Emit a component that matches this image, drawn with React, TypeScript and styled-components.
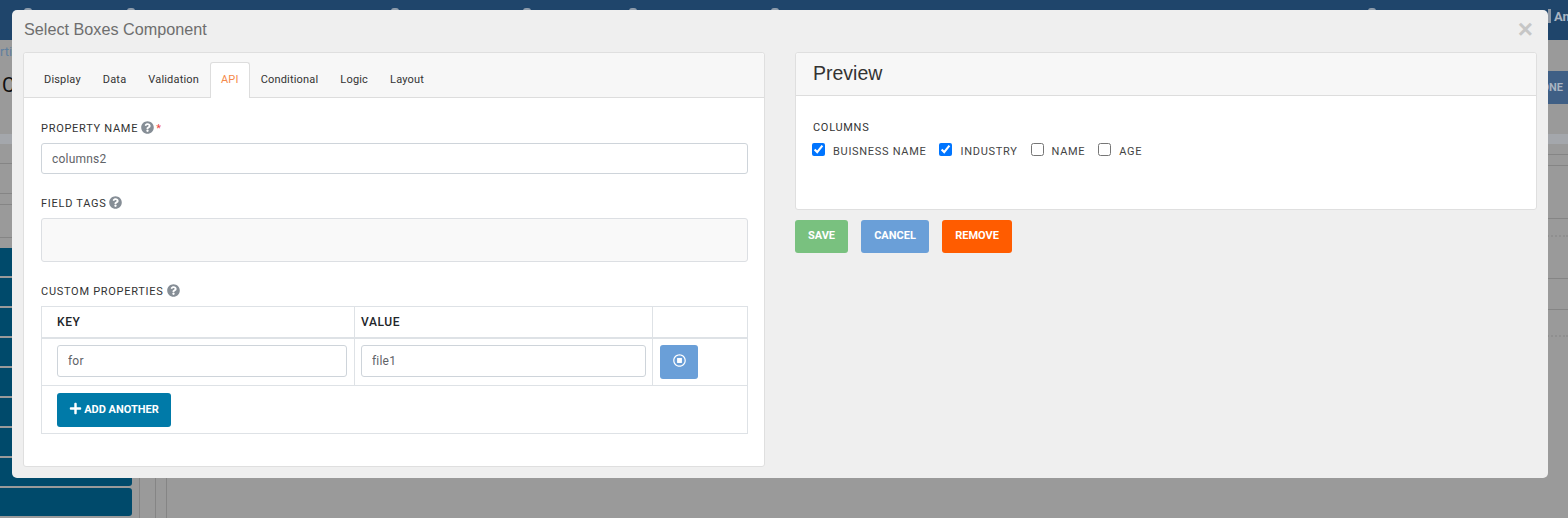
import { FaPlus, FaQuestionCircle, FaRegStopCircle } from 'react-icons/fa';
import styled, { createGlobalStyle } from 'styled-components';

const tabs = ['Display', 'Data', 'Validation', 'API', 'Conditional', 'Logic', 'Layout'];
const columns = [
  { label: 'BUISNESS NAME', checked: true },
  { label: 'INDUSTRY', checked: true },
  { label: 'NAME', checked: false },
  { label: 'AGE', checked: false },
];
const topBarGaps = [24, 95, 256, 124, 98, 134, 589];
const sideItems = [0, 1, 2, 3, 4, 5, 6, 7, 8];
const leftRows = [20, 30, 11, 33];
const rightRows = [
  { height: 11, dotted: false },
  { height: 11, dotted: false },
  { height: 53, dotted: false },
  { height: 18, dotted: true },
  { height: 42, dotted: false },
  { height: 31, dotted: false },
  { height: 27, dotted: true },
];

export default function App() {
  return (
    <>
      <GlobalStyle />
      <Page>
        <TopBar>
          <TopBarItems>
            {topBarGaps.map((gap, i) => (
              <TopBarDot key={i} $gap={gap} />
            ))}
          </TopBarItems>
          <UserBox>
            <UserIcon />
            <UserName>Am</UserName>
          </UserBox>
        </TopBar>
        <Crumb>rtic</Crumb>
        <TitleRow>
          <PageTitle>C</PageTitle>
          <DoneButton>DONE</DoneButton>
        </TitleRow>
        <Columns>
          <LeftPane>
            <Band />
            {leftRows.map((height, i) => (
              <PageRow key={i} $height={height} />
            ))}
            <SideList>
              {sideItems.map((item) => (
                <SideButton key={item} />
              ))}
            </SideList>
          </LeftPane>
          <RightPane>
            <Band />
            {rightRows.map((row, i) => (
              <PageRow key={i} $height={row.height} $dotted={row.dotted} />
            ))}
            <GuideLines>
              <Guide $width={16} />
              <Guide $width={11} />
              <Guide $width={0} />
            </GuideLines>
          </RightPane>
        </Columns>

        <Modal>
          <ModalHeader>
            <ModalTitle>Select Boxes Component</ModalTitle>
            <CloseButton>×</CloseButton>
          </ModalHeader>
          <ModalBody>
            <Panel>
              <TabBar>
                {tabs.map((tab) => (
                  <Tab key={tab} $active={tab === 'API'}>
                    {tab}
                  </Tab>
                ))}
              </TabBar>
              <FormBody>
                <Field>
                  <Label>
                    PROPERTY NAME <HelpIcon /> <Required>*</Required>
                  </Label>
                  <TextInput defaultValue="columns2" />
                </Field>
                <Field>
                  <Label>
                    FIELD TAGS <HelpIcon />
                  </Label>
                  <TagsBox />
                </Field>
                <Label>
                  CUSTOM PROPERTIES <HelpIcon />
                </Label>
                <PropsTable>
                  <colgroup>
                    <col width={313} />
                    <col width={298} />
                    <col />
                  </colgroup>
                  <thead>
                    <tr>
                      <KeyHead>KEY</KeyHead>
                      <ValueHead>VALUE</ValueHead>
                      <ValueHead />
                    </tr>
                  </thead>
                  <tbody>
                    <tr>
                      <KeyCell>
                        <TableInput defaultValue="for" />
                      </KeyCell>
                      <ValueCell>
                        <TableInput defaultValue="file1" />
                      </ValueCell>
                      <ActionCell>
                        <StopButton>
                          <FaRegStopCircle />
                        </StopButton>
                      </ActionCell>
                    </tr>
                    <tr>
                      <AddCell colSpan={3}>
                        <AddButton>
                          <FaPlus />
                          ADD ANOTHER
                        </AddButton>
                      </AddCell>
                    </tr>
                  </tbody>
                </PropsTable>
              </FormBody>
            </Panel>

            <PreviewColumn>
              <PreviewPanel>
                <PreviewHeader>Preview</PreviewHeader>
                <PreviewBody>
                  <PreviewLabel>COLUMNS</PreviewLabel>
                  <CheckRow>
                    {columns.map((column) => (
                      <CheckLabel key={column.label}>
                        <Check type="checkbox" defaultChecked={column.checked} />
                        {column.label}
                      </CheckLabel>
                    ))}
                  </CheckRow>
                </PreviewBody>
              </PreviewPanel>
              <Actions>
                <ActionButton $color="#79c17f" $width={53}>SAVE</ActionButton>
                <ActionButton $color="#6a9fd8" $width={68}>CANCEL</ActionButton>
                <ActionButton $color="#ff5c00" $width={70}>REMOVE</ActionButton>
              </Actions>
            </PreviewColumn>
          </ModalBody>
        </Modal>
      </Page>
    </>
  );
}

const GlobalStyle = createGlobalStyle`
  html, body {
    margin: 0;
    padding: 0;
    background: #9a9a9a;
    font-family: 'Roboto', 'Liberation Sans', sans-serif;
  }
  * {
    box-sizing: border-box;
  }
`;

const Page = styled.div`
  position: relative;
  display: flex;
  flex-direction: column;
  width: 1568px;
  height: 518px;
  overflow: hidden;
  background: #9a9a9a;
`;

const TopBar = styled.div`
  display: flex;
  align-items: flex-start;
  justify-content: space-between;
  height: 40px;
  flex: none;
  background: #1f456b;
`;

const TopBarItems = styled.div`
  display: flex;
  padding-top: 8px;
`;

const TopBarDot = styled.span<{ $gap: number }>`
  width: 8px;
  height: 4px;
  margin-left: ${({ $gap }) => $gap}px;
  border-radius: 3px 3px 0 0;
  background: #8e9cab;
`;

const UserBox = styled.div`
  display: flex;
  gap: 3px;
  width: 20px;
  margin-top: 9px;
  white-space: nowrap;
`;

const UserIcon = styled.span`
  width: 3px;
  height: 14px;
  flex: none;
  background: #8f99a6;
`;

const UserName = styled.span`
  font-size: 13px;
  font-weight: 700;
  color: #a9b4c2;
`;

const Crumb = styled.div`
  height: 31px;
  flex: none;
  padding-top: 4px;
  font-size: 13px;
  color: #5f7f9f;
`;

const TitleRow = styled.div`
  display: flex;
  align-items: flex-start;
  justify-content: space-between;
  height: 63px;
  flex: none;
`;

const PageTitle = styled.div`
  padding-left: 2px;
  font-size: 20px;
  line-height: 28px;
  color: #111;
`;

const DoneButton = styled.div`
  width: 60px;
  height: 33px;
  padding-right: 5px;
  text-align: right;
  line-height: 33px;
  font-size: 11px;
  font-weight: 700;
  background: #3f5f85;
  color: #a9b4c2;
`;

const Columns = styled.div`
  display: flex;
  flex: 1;
  min-height: 0;
`;

const LeftPane = styled.div`
  display: flex;
  flex-direction: column;
  width: 132px;
  flex: none;
`;

const RightPane = styled.div`
  display: flex;
  flex-direction: column;
  flex: 1;
`;

const Band = styled.div`
  height: 10px;
  flex: none;
  background: #a4a7ac;
`;

const PageRow = styled.div<{ $height: number; $dotted?: boolean }>`
  height: ${({ $height }) => $height}px;
  flex: none;
  border-bottom: ${({ $dotted }) => ($dotted ? '2px dotted #8f8f8f' : '1px solid #858585')};
`;

const SideList = styled.div`
  display: flex;
  flex-direction: column;
  gap: 2px;
  padding-top: 10px;
`;

const SideButton = styled.div`
  height: 28px;
  flex: none;
  border-radius: 0 3px 3px 0;
  background: #004a6b;
`;

const GuideLines = styled.div`
  display: flex;
  flex: 1;
  padding-left: 7px;
`;

const Guide = styled.div<{ $width: number }>`
  width: ${({ $width }) => $width}px;
  border-left: 1px solid #858585;
`;

const Modal = styled.div`
  position: absolute;
  top: 10px;
  left: 12px;
  display: flex;
  flex-direction: column;
  width: 1536px;
  height: 468px;
  padding: 0 11px;
  border-radius: 5px;
  background: #efefef;
`;

const ModalHeader = styled.div`
  display: flex;
  align-items: center;
  justify-content: space-between;
  height: 42px;
  flex: none;
`;

const ModalTitle = styled.h4`
  margin: 0 0 3px 1px;
  font-family: 'Liberation Sans', Arial, sans-serif;
  font-size: 16.2px;
  font-weight: 400;
  color: #6e6e6e;
`;

const CloseButton = styled.span`
  margin: 0 4px 4px 0;
  font-family: 'Liberation Sans', Arial, sans-serif;
  font-size: 26px;
  font-weight: 700;
  line-height: 1;
  color: #c6c6c6;
`;

const ModalBody = styled.div`
  display: grid;
  grid-template-columns: 742px 742px;
  column-gap: 30px;
  align-items: start;
`;

const Panel = styled.div`
  border: 1px solid #dfdfdf;
  border-radius: 3px;
  background: #fff;
`;

const TabBar = styled.div`
  display: flex;
  height: 45px;
  padding: 9px 0 0 9px;
  border-bottom: 1px solid #dddddd;
  border-radius: 3px 3px 0 0;
  background: #f7f7f7;
`;

const Tab = styled.div<{ $active: boolean }>`
  height: 36px;
  padding: 0 10px;
  border: 1px solid ${({ $active }) => ($active ? '#dddddd' : 'transparent')};
  border-bottom: 0;
  border-radius: 3px 3px 0 0;
  font-size: 11px;
  line-height: 33px;
  letter-spacing: 0.18px;
  color: ${({ $active }) => ($active ? '#f58a4b' : '#333')};
  background: ${({ $active }) => ($active ? '#fff' : 'transparent')};
`;

const FormBody = styled.div`
  display: flex;
  flex-direction: column;
  height: 368px;
  padding: 22px 16px 0 17px;
`;

const Field = styled.div`
  display: flex;
  flex-direction: column;
  margin-bottom: 21px;
`;

const Label = styled.label`
  display: flex;
  align-items: center;
  gap: 3px;
  height: 16px;
  margin-bottom: 7px;
  font-size: 11px;
  letter-spacing: 0.72px;
  color: #333;
`;

const HelpIcon = styled(FaQuestionCircle)`
  width: 13px;
  height: 13px;
  margin-top: -1px;
  color: #868e96;
`;

const Required = styled.span`
  margin-left: -1px;
  color: #ef4444;
`;

const TextInput = styled.input`
  display: block;
  width: 100%;
  height: 31px;
  padding: 0 10px;
  border: 1px solid #ced4da;
  border-radius: 3px;
  outline: none;
  font-family: 'Roboto', 'Liberation Sans', sans-serif;
  font-size: 12px;
  letter-spacing: 0.2px;
  color: #5f6368;
  background: #fff;
`;

const TableInput = styled(TextInput)`
  height: 32px;
`;

const TagsBox = styled.div`
  height: 44px;
  border: 1px solid #dcdfe3;
  border-radius: 3px;
  background: #f9f9f9;
`;

const PropsTable = styled.table`
  width: 100%;
  margin-top: 0;
  border-collapse: collapse;
  table-layout: fixed;
  border: 1px solid #dee2e6;
`;

const KeyHead = styled.th`
  height: 31px;
  padding: 0 0 0 15px;
  border: 1px solid #dee2e6;
  border-bottom: 2px solid #dee2e6;
  text-align: left;
  font-size: 12px;
  font-weight: 500;
  letter-spacing: 0.6px;
  color: #212529;
`;

const ValueHead = styled(KeyHead)`
  padding-left: 6px;
`;

const KeyCell = styled.td`
  height: 46px;
  padding: 6px 7px 6px 15px;
  border: 1px solid #dee2e6;
  vertical-align: top;
`;

const ValueCell = styled(KeyCell)`
  padding-left: 6px;
  padding-right: 6px;
`;

const ActionCell = styled(KeyCell)`
  padding-left: 7px;
`;

const StopButton = styled.div`
  display: flex;
  align-items: center;
  justify-content: center;
  width: 38px;
  height: 34px;
  padding-bottom: 3px;
  border-radius: 3px;
  font-size: 13px;
  color: #fff;
  background: #6a9fd8;
`;

const AddCell = styled.td`
  height: 48px;
  padding: 7px 15px 6px;
  border: 1px solid #dee2e6;
`;

const AddButton = styled.div`
  display: flex;
  align-items: center;
  justify-content: center;
  gap: 2px;
  width: 114px;
  height: 34px;
  border-radius: 3px;
  font-size: 11px;
  font-weight: 700;
  color: #fff;
  background: #007aa8;

  svg {
    width: 13px;
    height: 13px;
    margin-top: -2px;
  }
`;

const PreviewColumn = styled.div`
  display: flex;
  flex-direction: column;
  gap: 10px;
`;

const PreviewPanel = styled(Panel)`
  height: 158px;
`;

const PreviewHeader = styled.div`
  height: 43px;
  padding-left: 17px;
  border-bottom: 1px solid #dddddd;
  border-radius: 3px 3px 0 0;
  font-family: 'Liberation Sans', Arial, sans-serif;
  font-size: 19.5px;
  line-height: 41px;
  color: #333;
  background: #f7f7f7;
`;

const PreviewBody = styled.div`
  padding: 24px 16px 0 16px;
`;

const PreviewLabel = styled.div`
  height: 16px;
  margin-bottom: 5px;
  padding-left: 1px;
  font-size: 11px;
  line-height: 16px;
  letter-spacing: 0.7px;
  color: #333;
`;

const CheckRow = styled.div`
  display: flex;
  gap: 13px;
`;

const CheckLabel = styled.label`
  display: flex;
  align-items: flex-start;
  gap: 8px;
  height: 20px;
  font-size: 11px;
  line-height: 22px;
  letter-spacing: 0.7px;
  color: #444;
`;

const Check = styled.input`
  width: 13px;
  height: 13px;
  margin: 2px 0 0 0;
  flex: none;
`;

const Actions = styled.div`
  display: flex;
  gap: 13px;
`;

const ActionButton = styled.div<{ $color: string; $width: number }>`
  width: ${({ $width }) => $width}px;
  height: 33px;
  border-radius: 3px;
  text-align: center;
  font-size: 11px;
  font-weight: 700;
  line-height: 31px;
  color: #fff;
  background: ${({ $color }) => $color};
`;
